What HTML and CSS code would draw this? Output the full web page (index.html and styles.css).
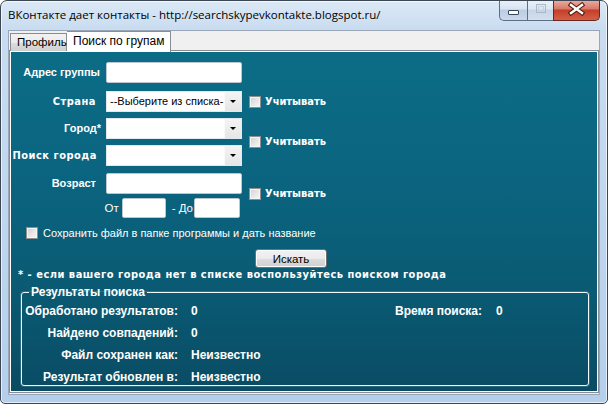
FILE: index.html
```html
<!DOCTYPE html>
<html lang="ru">
<head>
<meta charset="utf-8">
<title>ВКонтакте дает контакты</title>
<link rel="stylesheet" href="styles.css">
</head>
<body>
<div class="window">
  <div class="titlebar">
    <span class="title">ВКонтакте дает контакты - http://searchskypevkontakte.blogspot.ru/</span>
    <div class="caption">
      <span class="cbtn cbtn-min"><svg width="26" height="19" viewBox="0 0 26 19"><rect x="8.5" y="10.5" width="10" height="4" rx="0.5" fill="#fff" stroke="#34465c"/></svg></span>
      <span class="cbtn cbtn-max"><svg width="26" height="19" viewBox="0 0 26 19"><rect x="8.5" y="4.5" width="9" height="8" fill="none" stroke="#aab8c9"/><rect x="10.5" y="6.5" width="5" height="4" fill="none" stroke="#c6d1de"/></svg></span>
      <span class="cbtn cbtn-close"><svg width="46" height="19" viewBox="0 0 46 19"><path d="M17 5 L28 13 M28 5 L17 13" stroke="#5a1a10" stroke-width="4.6" stroke-linecap="square"/><path d="M17 5 L28 13 M28 5 L17 13" stroke="#fff" stroke-width="2.4" stroke-linecap="square"/></svg></span>
    </div>
  </div>
  <div class="client">
    <div class="tabs">
      <div class="tab">Профиль</div>
      <div class="tab tab-active">Поиск по групам</div>
    </div>
    <div class="panel">
      <div class="page">
        <div class="form">
          <label class="lbl lbl-addr">Адрес группы</label>
          <input class="field" type="text">

          <label class="lbl lbl-wide lbl-country">Страна</label>
          <div class="combo"><span class="combo-text">--Выберите из списка-</span><span class="combo-btn"><span class="arrow"></span></span></div>
          <label class="chk chk-country"><input type="checkbox"><span>Учитывать</span></label>

          <label class="lbl lbl-city">Город*</label>
          <div class="combo"><span class="combo-text"></span><span class="combo-btn"><span class="arrow"></span></span></div>
          <label class="chk chk-city"><input type="checkbox"><span>Учитывать</span></label>

          <label class="lbl lbl-wide lbl-search">Поиск города</label>
          <div class="combo"><span class="combo-text"></span><span class="combo-btn"><span class="arrow"></span></span></div>

          <label class="lbl lbl-age">Возраст</label>
          <input class="field" type="text">
          <label class="chk chk-age"><input type="checkbox"><span>Учитывать</span></label>

          <div class="range">
            <span class="range-lbl">От</span>
            <input class="field field-from" type="text">
            <span class="range-lbl range-to">- До</span>
            <input class="field field-to" type="text">
          </div>
        </div>

        <label class="save"><input type="checkbox"><span>Сохранить файл в папке программы и дать название</span></label>

        <button class="search-btn" type="button">Искать</button>

        <div class="note">* - если вашего города нет в списке воспользуйтесь поиском города</div>

        <fieldset class="results">
          <legend>Результаты поиска</legend>
          <div class="res-grid">
            <span class="res-lbl">Обработано результатов:</span>
            <span class="res-val">0</span>
            <span class="res-lbl res-time">Время поиска:</span>
            <span class="res-val res-time-val">0</span>

            <span class="res-lbl">Найдено совпадений:</span>
            <span class="res-val res-wide">0</span>

            <span class="res-lbl">Файл сохранен как:</span>
            <span class="res-val res-wide">Неизвестно</span>

            <span class="res-lbl">Результат обновлен в:</span>
            <span class="res-val res-wide">Неизвестно</span>
          </div>
        </fieldset>
      </div>
    </div>
  </div>
</div>
</body>
</html>
```

FILE: styles.css
```css
* { box-sizing: border-box; }
html, body { margin: 0; padding: 0; }
body {
  width: 608px;
  height: 404px;
  overflow: hidden;
  background: #ffffff;
  font-family: "Liberation Sans", Arial, sans-serif;
}

.window {
  width: 608px;
  height: 404px;
  border: 1px solid #3d4653;
  border-radius: 7px 7px 5px 5px;
  background: linear-gradient(180deg, #dce9f6 0px, #c9dcf0 28px, #bdd5ee 60%, #b4cfec 100%);
  box-shadow: inset 0 0 0 1px rgba(255, 255, 255, 0.65);
  display: flex;
  flex-direction: column;
  overflow: hidden;
}

/* title bar */
.titlebar {
  height: 29px;
  display: flex;
  align-items: flex-start;
  padding: 0 7px 0 7px;
}
.title {
  font-family: "Open Sans", "Liberation Sans", sans-serif;
  font-size: 11.5px;
  line-height: 27px;
  color: #000;
  white-space: nowrap;
}
.caption {
  margin-left: auto;
  margin-top: -1px;
  display: flex;
  height: 21px;
}
.cbtn {
  display: block;
  height: 21px;
  border: 1px solid #5d6f86;
  border-top: none;
}
.cbtn svg { display: block; }
.cbtn-min {
  width: 28px;
  border-right: none;
  border-radius: 0 0 0 5px;
  background: linear-gradient(180deg, #eaf1f9 0%, #d9e4f1 45%, #bccde2 50%, #c9d9eb 100%);
}
.cbtn-max {
  width: 26px;
  border-right: none;
  background: linear-gradient(180deg, #eaf1f9 0%, #dde7f2 45%, #c6d5e7 50%, #d2dfee 100%);
}
.cbtn-close {
  width: 47px;
  border-color: #6e2419;
  border-radius: 0 0 5px 0;
  background: linear-gradient(180deg, #eab0a2 0%, #d8786a 45%, #c43e27 50%, #d2604a 100%);
}

/* client area */
.client {
  flex: 1;
  margin: 0 7px 8px 7px;
  border: 1px solid #98a6b8;
  background: #f0f0f0;
  display: flex;
  flex-direction: column;
  padding-bottom: 1px;
}
.tabs {
  height: 20px;
  display: flex;
  align-items: flex-end;
  padding-left: 1px;
  position: relative;
  z-index: 2;
}
.tab {
  height: 18px;
  padding: 0 0 0 6px;
  border: 1px solid #898c95;
  border-bottom: none;
  background: linear-gradient(180deg, #f2f2f2 0%, #ebebeb 50%, #dddddd 51%, #cfcfcf 100%);
  font-size: 11.5px;
  line-height: 17px;
  color: #000;
  width: 57px;
  white-space: nowrap;
}
.tab-active {
  height: 21px;
  margin-bottom: -1px;
  width: 104px;
  border-left: none;
  background: #ffffff;
  font-size: 12px;
  line-height: 18px;
  padding: 0 6px;
}

.panel {
  margin-top: -1px;
  height: 343px;
  border: 1px solid #898c95;
  background: #ffffff;
  padding: 1px;
}
.page {
  height: 339px;
  background: linear-gradient(180deg, #0c6c86 0%, #0b6580 35%, #0a5a73 70%, #094c64 100%);
  padding-top: 10px;
  color: #fff;
  font-size: 11px;
  display: flex;
  flex-direction: column;
  align-items: flex-start;
}

/* form grid */
.form {
  display: grid;
  grid-template-columns: 95px 136px 7px auto;
  grid-template-rows: 29px 27px 27px 28px 25px 20px;
  align-items: start;
}
.lbl {
  grid-column: 1;
  justify-self: end;
  font-weight: bold;
  line-height: 21px;
  white-space: nowrap;
}
.lbl-wide {
  font-family: "DejaVu Sans Condensed", "DejaVu Sans", sans-serif;
  font-size: 11px;
  letter-spacing: 0.5px;
}
.lbl-addr { margin-right: 6px; }
.lbl-country { margin-right: 10px; }
.lbl-city { margin-right: 5px; }
.lbl-search { margin-right: 9px; }
.lbl-age { margin-right: 10px; }

.field {
  grid-column: 2;
  display: block;
  width: 136px;
  height: 21px;
  margin: 0;
  border: 1px solid #bcc6d2;
  border-radius: 2px;
  background: #fff;
  font: inherit;
}
.combo {
  grid-column: 2;
  width: 136px;
  height: 21px;
  display: flex;
  background: #fff;
  border: 1px solid #e3e8ee;
  color: #000;
}
.combo-text {
  flex: 1;
  padding-left: 3px;
  line-height: 19px;
  font-size: 11px;
  white-space: nowrap;
  overflow: hidden;
}
.combo-btn {
  width: 17px;
  display: flex;
  align-items: center;
  justify-content: center;
  background: linear-gradient(180deg, #f4f4f4, #e6e6e6);
  border-left: 1px solid #fafafa;
}
.arrow {
  width: 0;
  height: 0;
  border-left: 3px solid transparent;
  border-right: 3px solid transparent;
  border-top: 3px solid #000;
}

.chk {
  grid-column: 4;
  display: flex;
  align-items: center;
  height: 21px;
  font-family: "DejaVu Sans Condensed", "DejaVu Sans", sans-serif;
  font-weight: bold;
  font-size: 11px;
  white-space: nowrap;
}
.chk-country { grid-row: 2; }
.chk-city { grid-row: 3 / span 2; margin-top: 13px; }
.chk-age { grid-row: 5 / span 2; margin-top: 10px; }

input[type="checkbox"] {
  appearance: none;
  -webkit-appearance: none;
  width: 12px;
  height: 12px;
  margin: 0 4px 0 0;
  border: 1px solid #8e8f8f;
  background: linear-gradient(135deg, #d0d0d0 0%, #e6e6e6 50%, #f8f8f8 100%);
  box-shadow: inset 0 0 0 1px #f4f4f4;
  flex: none;
}

.range {
  grid-column: 1 / 3;
  grid-row: 6;
  justify-self: end;
  display: flex;
  align-items: center;
  height: 20px;
  padding-right: 2px;
}
.range-lbl {
  font-size: 11.5px;
  line-height: 20px;
}
.field-from { width: 44px; height: 20px; margin-left: 3px; }
.range-to { margin-left: 6px; }
.field-to { width: 46px; height: 20px; margin-left: 1px; }

/* save checkbox */
.save {
  display: flex;
  align-items: center;
  margin-top: 9px;
  padding-left: 15px;
  height: 12px;
  font-size: 11px;
  white-space: nowrap;
}
.save input[type="checkbox"] { margin-right: 5px; }

.search-btn {
  margin: 10px 0 0 244px;
  width: 72px;
  height: 19px;
  padding: 0;
  border: 1px solid #707070;
  border-radius: 3px;
  background: linear-gradient(180deg, #f2f2f2 0%, #ebebeb 50%, #dddddd 51%, #cfcfcf 100%);
  box-shadow: inset 0 0 0 1px #fcfcfc;
  font-family: "Liberation Sans", Arial, sans-serif;
  font-size: 11.5px;
  color: #000;
}

.note {
  padding-left: 7px;
  font-family: "DejaVu Sans Condensed", "DejaVu Sans", sans-serif;
  font-weight: bold;
  font-size: 11px;
  letter-spacing: 0.5px;
  line-height: 13px;
  white-space: nowrap;
}

/* results group */
.results {
  margin: 4px 0 0 10px;
  width: 568px;
  padding: 5px 0 1px 0;
  border: 1px solid #f4f8fa;
  border-radius: 3px;
  box-shadow: 0 0 0 1px rgba(255, 255, 255, 0.15);
  min-width: 0;
  font-size: 12px;
}
.results legend {
  margin-left: 7px;
  padding: 0 2px;
  font-weight: bold;
  line-height: 14px;
}
.res-grid {
  display: grid;
  grid-template-columns: 156px 217px auto auto;
  row-gap: 8px;
  justify-content: start;
  font-weight: bold;
  line-height: 14px;
}
.res-lbl { text-align: right; white-space: nowrap; grid-column: 1; }
.res-val { padding-left: 13px; white-space: nowrap; grid-column: 2; }
.res-time { grid-column: 3; }
.res-time-val { grid-column: 4; padding-left: 14px; }
```
